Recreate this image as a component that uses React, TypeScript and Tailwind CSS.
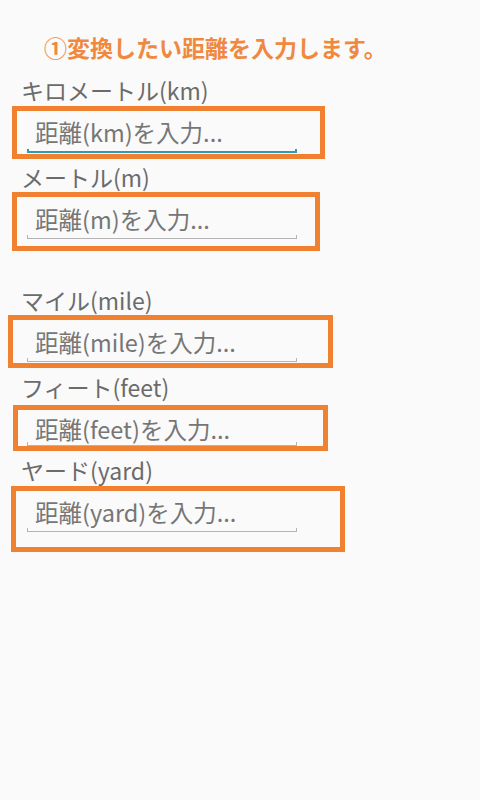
import React from 'react';

type Field = {
  label: string;
  placeholder: string;
  focused?: boolean;
  mt: string;
  inputH: string;
  lineMt: string;
  box: string;
};

const fields: Field[] = [
  {
    label: 'キロメートル(km)',
    placeholder: '距離(km)を入力...',
    focused: true,
    mt: 'mt-[14px]',
    inputH: 'h-[57px]',
    lineMt: 'mt-[3px]',
    box: 'top-[31px] left-[12px] w-[313px] h-[53px]',
  },
  {
    label: 'メートル(m)',
    placeholder: '距離(m)を入力...',
    mt: 'mt-0',
    inputH: 'h-[57px]',
    lineMt: 'mt-[2px]',
    box: 'top-[30px] left-[12px] w-[308px] h-[59px]',
  },
  {
    label: 'マイル(mile)',
    placeholder: '距離(mile)を入力...',
    mt: 'mt-[36px]',
    inputH: 'h-[57px]',
    lineMt: 'mt-[2px]',
    box: 'top-[30px] left-[8px] w-[325px] h-[53px]',
  },
  {
    label: 'フィート(feet)',
    placeholder: '距離(feet)を入力...',
    mt: 'mt-0',
    inputH: 'h-[53px]',
    lineMt: 'mt-[-1px]',
    box: 'top-[33px] left-[13px] w-[315px] h-[46px]',
  },
  {
    label: 'ヤード(yard)',
    placeholder: '距離(yard)を入力...',
    mt: 'mt-0',
    inputH: 'h-[57px]',
    lineMt: 'mt-[2px]',
    box: 'top-[31px] left-[11px] w-[334px] h-[66px]',
  },
];

const DistanceField = ({ field }: { field: Field }) => {
  return (
    <div className={`relative ${field.mt}`}>
      <div className="h-[30px] leading-[30px] pl-[21px] text-[23px] text-[#6b6b6b]">
        {field.label}
      </div>
      <div className={`${field.inputH} pt-[13px] pl-[27px]`}>
        <div className="h-[28px] leading-[28px] pl-[8px] text-[23.5px] text-[#767676] whitespace-nowrap">
          {field.placeholder}
        </div>
        <div
          className={
            field.focused
              ? `${field.lineMt} w-[270px] h-[4px] border-x-2 border-b-2 border-[#2c9bb5]`
              : `${field.lineMt} w-[270px] h-[4px] border-x border-b border-[#b4b4b4]`
          }
        />
      </div>
      {/* annotation frame drawn over the input */}
      <div className={`absolute ${field.box} border-[5px] border-[#f08130] pointer-events-none`} />
    </div>
  );
};

export default function App() {
  return (
    <div
      className="w-[480px] h-[800px] bg-[#fafafa] overflow-hidden"
      style={{ fontFamily: '"Noto Sans CJK JP", "Noto Sans", sans-serif' }}
    >
      <div className="mt-[33px] h-[28px] leading-[28px] pl-[44px] text-[23px] font-bold text-[#f0893f] whitespace-nowrap">
        ①変換したい距離を入力します。
      </div>
      {fields.map((f) => (
        <DistanceField key={f.label} field={f} />
      ))}
    </div>
  );
}
